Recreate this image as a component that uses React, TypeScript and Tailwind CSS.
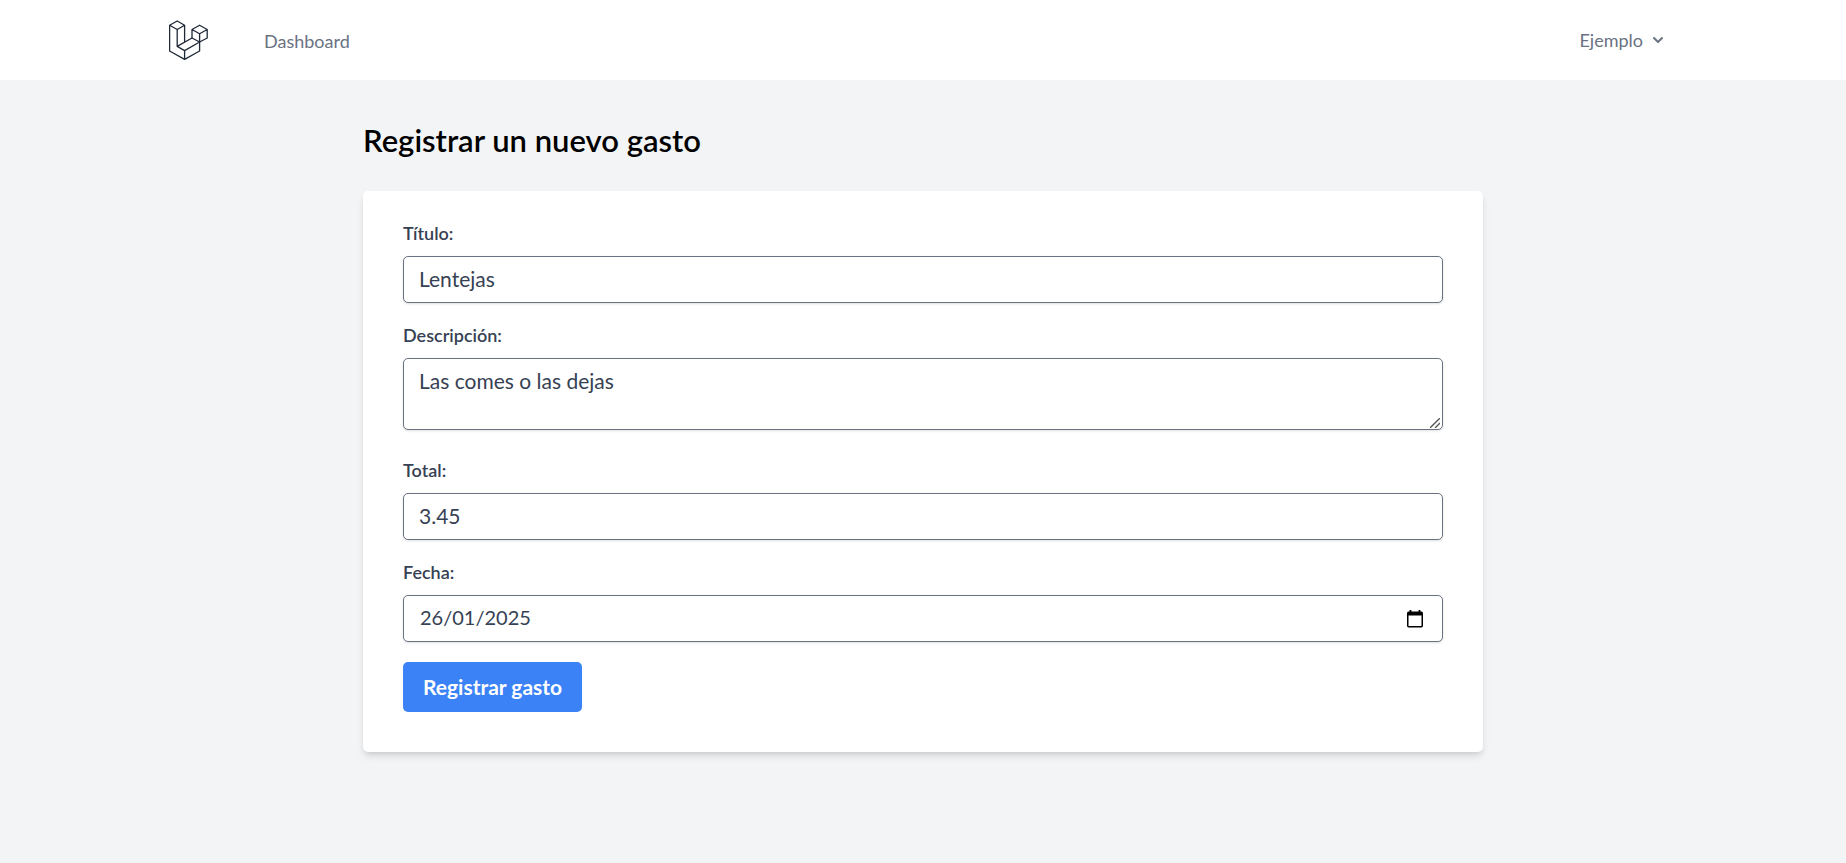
import React from "react";

const box = "w-full rounded-[5px] border border-gray-500 bg-white shadow-sm";
const field = "block h-[47px] px-[15px] pb-[2px] text-[21px] leading-[25px] text-gray-700";
const label = "mb-[10px] block text-[18px] leading-[25px] font-semibold text-gray-700";

function Logo() {
  return (
    <svg
      viewBox="0 0 39 40"
      className="h-10 w-[39px]"
      fill="none"
      stroke="#1f2937"
      strokeWidth="1.3"
      strokeLinejoin="round"
      aria-hidden="true"
    >
      <path d="M0.6 5.2 L8.2 1 L15.6 5.2 L8.2 9.5 Z" />
      <path d="M0.6 5.2 V31 L15.6 39.4 L30.6 31 V22" />
      <path d="M15.6 5.2 V22 M8.2 9.5 V26.4 L15.6 30.6 V39.4 M8.2 26.4 L23 18 L30.6 22 L15.6 30.6" />
      <path d="M23 9.5 L30.6 5.2 L38.2 9.5 L30.6 13.8 Z M23 9.5 V18 M30.6 13.8 V22 M38.2 9.5 V18 L30.6 22" />
    </svg>
  );
}

function CalendarIcon() {
  return (
    <svg className="h-[18px] w-4" viewBox="0 0 16 18" aria-hidden="true">
      <path
        fill="#000"
        fillRule="evenodd"
        d="M2.6 0h1.8v1.6h7.2V0h1.8v1.6h1A1.6 1.6 0 0 1 16 3.2v12.6a1.6 1.6 0 0 1-1.6 1.6H1.6A1.6 1.6 0 0 1 0 15.8V3.2a1.6 1.6 0 0 1 1.6-1.6h1zM1.5 5.6v10.3h13V5.6z"
      />
    </svg>
  );
}

export default function App() {
  return (
    <div className="min-h-screen bg-gray-100 font-['Lato','Noto_Sans',sans-serif]">
      <nav className="bg-white">
        <div className="mx-auto flex h-20 max-w-[1600px] items-center justify-between px-10">
          <div className="flex items-center gap-14 pl-[6px]">
            <a href="#" aria-label="Inicio">
              <Logo />
            </a>
            <a href="#" className="pt-[3px] text-[18px] leading-[25px] text-gray-500">
              Dashboard
            </a>
          </div>
          <button
            type="button"
            className="flex items-center gap-[5px] px-[15px] text-[18px] leading-[25px] text-gray-500"
          >
            Ejemplo
            <svg className="size-5" viewBox="0 0 20 20" fill="currentColor" aria-hidden="true">
              <path
                fillRule="evenodd"
                clipRule="evenodd"
                d="M5.293 7.293a1 1 0 011.414 0L10 10.586l3.293-3.293a1 1 0 111.414 1.414l-4 4a1 1 0 01-1.414 0l-4-4a1 1 0 010-1.414z"
              />
            </svg>
          </button>
        </div>
      </nav>

      <main className="mx-auto max-w-[1120px] py-10">
        <h1 className="mb-[30px] text-[31px] leading-[41px] font-semibold text-black">
          Registrar un nuevo gasto
        </h1>

        <form
          className="rounded-[5px] bg-white px-10 pt-[30px] pb-10 shadow-[0_5px_8px_-1px_rgba(0,0,0,0.1),0_3px_5px_-2px_rgba(0,0,0,0.1)]"
          onSubmit={(e) => e.preventDefault()}
        >
          <div className="mb-5">
            <label className={label} htmlFor="titulo">
              Título:
            </label>
            <input id="titulo" type="text" className={`${box} ${field}`} defaultValue="Lentejas" />
          </div>

          <div className="mb-7">
            <label className={label} htmlFor="descripcion">
              Descripción:
            </label>
            <div className="relative">
              <textarea
                id="descripcion"
                rows={2}
                className={`${box} block h-[72px] resize-none px-[15px] py-[9px] text-[21px] leading-[25px] text-gray-700`}
                defaultValue="Las comes o las dejas"
              />
              <svg
                className="pointer-events-none absolute right-[3px] bottom-[2px] size-[10px]"
                viewBox="0 0 10 10"
                fill="none"
                stroke="#555"
                strokeWidth="1.4"
                aria-hidden="true"
              >
                <path d="M0 10 L10 0 M5 10 L10 5" />
              </svg>
            </div>
          </div>

          <div className="mb-5">
            <label className={label} htmlFor="total">
              Total:
            </label>
            <input
              id="total"
              type="number"
              step="0.01"
              className={`${box} ${field}`}
              defaultValue="3.45"
            />
          </div>

          <div className="mb-5">
            <label className={label} htmlFor="fecha">
              Fecha:
            </label>
            <div className={`${box} flex h-[47px] items-center pr-[19px] pl-4`}>
              <input
                id="fecha"
                type="text"
                inputMode="numeric"
                className="min-w-0 flex-1 pb-[2px] text-[20px] leading-[25px] text-gray-700 outline-none"
                defaultValue="26/01/2025"
              />
              <button type="button" aria-label="Abrir calendario">
                <CalendarIcon />
              </button>
            </div>
          </div>

          <button
            type="submit"
            className="block rounded-[5px] bg-[#3b82f6] px-5 py-[10px] text-[21px] leading-[30px] font-bold text-white"
          >
            Registrar gasto
          </button>
        </form>
      </main>
    </div>
  );
}
